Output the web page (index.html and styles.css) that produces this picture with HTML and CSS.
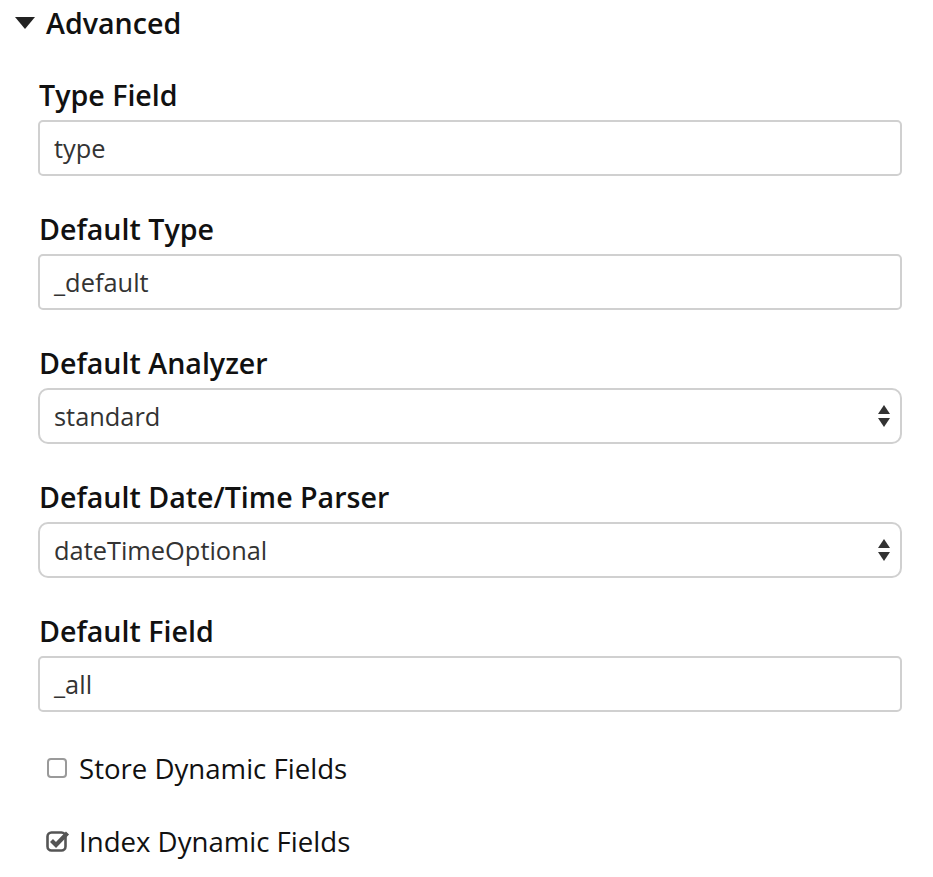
FILE: index.html
```html
<!DOCTYPE html>
<html>
<head>
<meta charset="utf-8">
<link rel="stylesheet" href="styles.css">
</head>
<body>
<div class="panel">
  <div class="section-head">
    <span class="caret"></span>
    <span class="section-title">Advanced</span>
  </div>
  <div class="fields">
    <div class="group">
      <label class="label">Type Field</label>
      <div class="input">type</div>
    </div>
    <div class="group">
      <label class="label">Default Type</label>
      <div class="input">_default</div>
    </div>
    <div class="group">
      <label class="label">Default Analyzer</label>
      <div class="input select"><span>standard</span>
        <svg class="arrows" width="12" height="24" viewBox="0 0 12 24"><path d="M6 1 L12 10 L0 10 Z" fill="#333"/><path d="M0 14 L12 14 L6 23 Z" fill="#333"/></svg>
      </div>
    </div>
    <div class="group">
      <label class="label">Default Date/Time Parser</label>
      <div class="input select"><span>dateTimeOptional</span>
        <svg class="arrows" width="12" height="24" viewBox="0 0 12 24"><path d="M6 1 L12 10 L0 10 Z" fill="#333"/><path d="M0 14 L12 14 L6 23 Z" fill="#333"/></svg>
      </div>
    </div>
    <div class="group">
      <label class="label">Default Field</label>
      <div class="input">_all</div>
    </div>
    <div class="checks">
      <div class="check">
        <span class="box"></span>
        <span class="check-label">Store Dynamic Fields</span>
      </div>
      <div class="check">
        <svg class="checked" width="25" height="24" viewBox="0 0 25 24">
          <rect x="1.5" y="4.5" width="18" height="18" rx="4" fill="none" stroke="#555" stroke-width="2.6"/>
          <path d="M5.5 12.5 L10 17 L21.5 5" fill="none" stroke="#555" stroke-width="4.2" stroke-linecap="butt" stroke-linejoin="miter"/>
        </svg>
        <span class="check-label">Index Dynamic Fields</span>
      </div>
    </div>
  </div>
</div>
</body>
</html>
```
FILE: styles.css
```css
html, body {
  margin: 0;
  padding: 0;
  background: #fff;
}
body {
  font-family: "Open Sans", "Noto Sans", sans-serif;
  color: #111;
}
.panel {
  width: 933px;
}
.section-head {
  display: flex;
  align-items: center;
  height: 46px;
  padding-left: 15px;
}
.caret {
  width: 0;
  height: 0;
  border-left: 10px solid transparent;
  border-right: 10px solid transparent;
  border-top: 12px solid #222;
  margin-right: 11px;
  margin-top: -1px;
}
.section-title {
  font-size: 28.6px;
  font-weight: 600;
  line-height: 36px;
}
.fields {
  padding-left: 38px;
  width: 864px;
  padding-top: 31px;
}
.group {
  display: flex;
  flex-direction: column;
  margin-bottom: 35px;
}
.label {
  font-size: 28.6px;
  font-weight: 600;
  line-height: 36px;
  margin-bottom: 7px;
  padding-left: 1px;
}
.input {
  box-sizing: border-box;
  height: 56px;
  border: 2px solid #d0d0d0;
  border-radius: 5px;
  padding: 0 14px;
  font-size: 25.4px;
  color: #333;
  display: flex;
  align-items: center;
}
.select {
  border-radius: 10px;
  justify-content: space-between;
  padding-right: 10px;
}
.arrows {
  display: block;
}
.checks {
  display: flex;
  flex-direction: column;
  gap: 37px;
  padding-left: 9px;
  margin-top: 38px;
}
.check {
  display: flex;
  align-items: center;
  height: 36px;
}
.box {
  box-sizing: border-box;
  width: 20px;
  height: 20px;
  border: 2px solid #9a9a9a;
  border-radius: 4px;
  margin-right: 12px;
}
.checked {
  margin-left: -1px;
  margin-right: 8px;
  margin-top: -3px;
}
.check-label {
  font-size: 27.6px;
  line-height: 36px;
}
```
